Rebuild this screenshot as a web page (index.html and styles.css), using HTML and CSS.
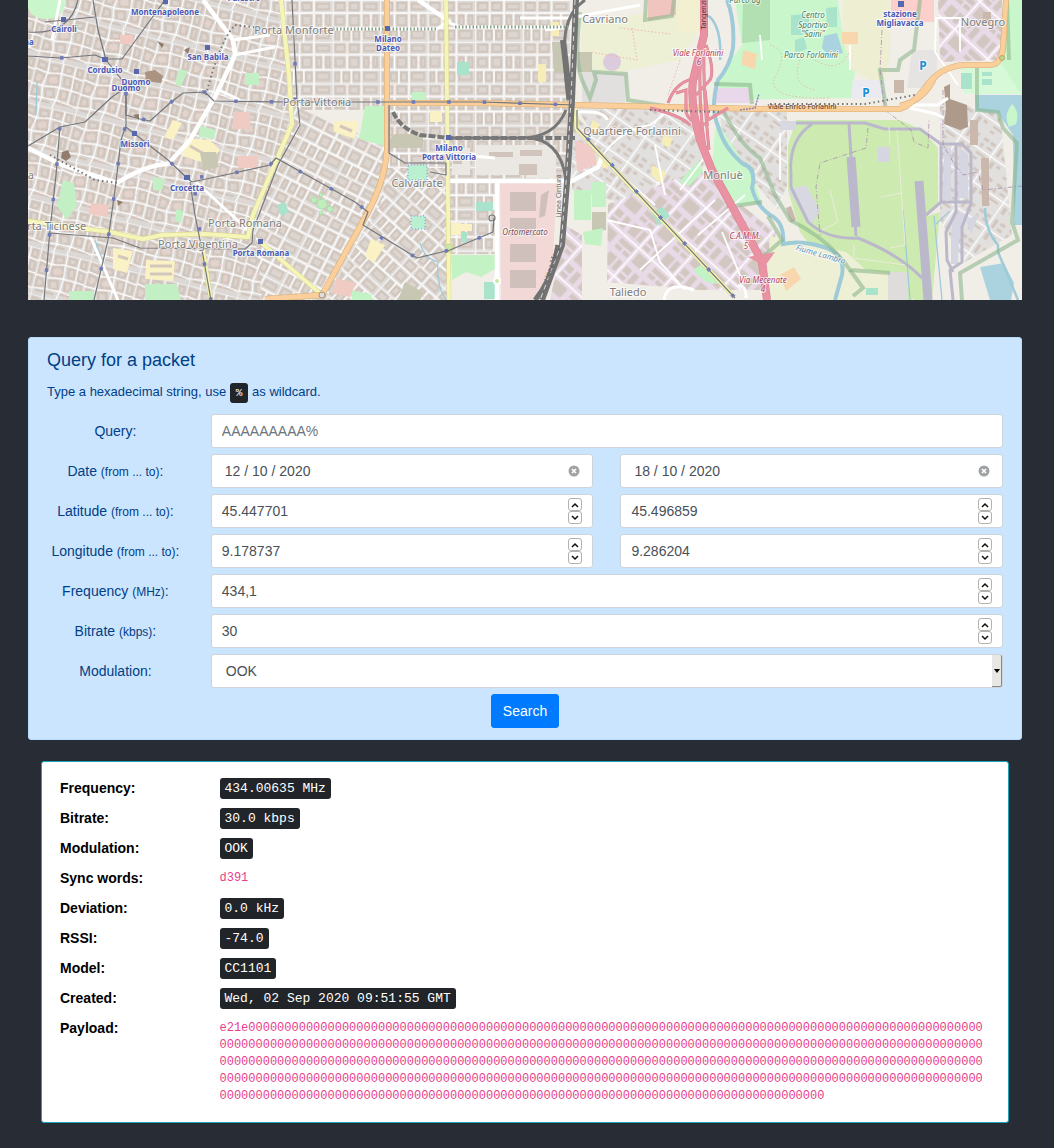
FILE: index.html
```html
<!DOCTYPE html>
<html lang="en">
<head>
<meta charset="utf-8">
<meta name="viewport" content="width=device-width, initial-scale=1">
<title>Query for a packet</title>
<link rel="stylesheet" href="styles.css">
</head>
<body>
<main class="page">
  <svg class="map" viewBox="28 0 994 300" preserveAspectRatio="xMidYMax slice" role="img" aria-label="Map of Milan">
    <defs>
      <pattern id="blocks" width="66" height="58" patternUnits="userSpaceOnUse" patternTransform="scale(.72)">
        <rect width="66" height="58" fill="#dfdcd9"/>
        <path d="M4 4h13v10H4zM24 4h12v10H24zM44 5h17v8H44zM4 23h12v11H4zM24 22h12v13H24zM44 22h6v13h-6zM57 22h5v13h-5zM4 43h5v11H4zM15 43h8v11h-8zM29 43h8v11h-8zM44 43h17v10H44z" fill="#ddd6d0" stroke="#d1c6bd" stroke-width="3"/>
        <path d="M0 0H66M0 18H66M0 39H66M20 0V39M40 0V58M53 18V39M12 39V58M0 0V58M26 39V58" fill="none" stroke="#fff" stroke-width="2"/>
        <path d="M40 18L66 39M20 0V18" stroke="#f0b8ae" stroke-width=".8" stroke-dasharray="2 2"/>
      </pattern>
      <pattern id="old" width="74" height="68" patternUnits="userSpaceOnUse" patternTransform="rotate(14) scale(.68)">
        <rect width="74" height="68" fill="#dcd8d5"/>
        <path d="M4 4l12 2-1 9-11-2zM23 6l12-1 2 8-12 3zM44 4h11l-1 8-9 2zM62 4h8v12l-7-3zM4 20l12 3-3 12H4zM22 23l15-4 2 13-15 3zM46 20l9-2 2 14h-9zM62 20l8 2v12l-7-1zM4 42l8 1 3 9-11 4zM22 43l12-3 3 11-11 5zM45 40l10-1 1 12-9 1zM63 40h7v15h-6zM5 61h28M42 59h26" fill="#ddd5cf" stroke="#d0c4bb" stroke-width="3.400"/>
        <path d="M0 0H74M0 16L20 19 40 15 74 18M0 38L20 39 40 36 74 37M0 58L20 56 42 55 74 59M19 0L20 19 17 38 20 56 18 68M40 0V15L42 36 41 55 38 68M59 0V17L60 37 59 58M0 0V68" fill="none" stroke="#fff" stroke-width="1.800"/>
        <path d="M0 28L20 29 42 27M30 15V36M50 37V68" fill="none" stroke="#f4cfc7" stroke-width="1"/>
      </pattern>
      <pattern id="slant" href="#blocks" patternTransform="rotate(27) scale(.72)"/>
      <pattern id="slant2" href="#blocks" patternTransform="rotate(42) scale(.72)"/>
      <pattern id="works" width="52" height="44" patternUnits="userSpaceOnUse" patternTransform="rotate(42) scale(.85)">
        <rect width="52" height="44" fill="#e8dae6"/>
        <path d="M3 3h11v14H3zM17 3h6v14h-6zM29 3h9v8h-9zM42 3h7v15h-7zM29 14h9v5h-9zM3 26h20v6H3zM3 35h9v5H3zM15 35h8v5h-8zM30 26h18v14H30z" fill="#d3c7c1"/>
        <path d="M0 22H52M26 0V44" stroke="#fff" stroke-width="1.800"/>
      </pattern>
      <pattern id="suburb" width="46" height="38" patternUnits="userSpaceOnUse" patternTransform="rotate(35) scale(.8)">
        <rect width="46" height="38" fill="#e1e0de"/>
        <path d="M3 4h7v4H3zM13 4h7v4h-7zM3 12h4v5H3zM12 12h8v3h-8zM27 4h4v12h-4zM35 4h7v4h-7zM35 12h7v4h-7zM4 24h14v3H4zM4 31h6v3H4zM27 24h5v9h-5zM36 24h5v4h-5z" fill="#d2c6be"/>
        <path d="M0 20H46M23 0V38" stroke="#fff" stroke-width="1.500"/>
      </pattern>
    </defs>

    <rect x="28" width="994" height="300" fill="#f1eee8"/>

    <!-- built-up districts -->
    <path d="M28 0H282L294 110 255 232 270 300H28z" fill="url(#old)"/>
    <path d="M282 0H570V182H388V110L294 110z" fill="url(#blocks)"/>
    <path d="M294 106L388 146V300H262L255 232z" fill="url(#slant)"/>
    <path d="M388 168H448V300H325L380 205z" fill="url(#slant2)"/>
    <path d="M450 182H498V254H450z" fill="url(#blocks)"/>
    <path d="M577 108H650L690 120 705 165 668 200 590 130z" fill="url(#suburb)"/>
    <path d="M590 130L668 200 650 210 572 190V112z" fill="url(#suburb)"/>
    <path d="M608 204L700 170 735 200 776 232 765 290H700L607 282z" fill="url(#works)"/>
    <path d="M720 110H787V185L778 210 740 165 722 140z" fill="url(#suburb)"/>
    <path d="M938 0H1002V60L940 62zM565 225l17 10v65h-32z" fill="url(#works)"/>
    <path d="M940 100L1000 112 1012 235 965 262 940 220z" fill="url(#suburb)"/>

    <!-- fields, parks and yards -->
    <path d="M582 22L640 14 680 0 700 30 680 60 620 72 582 70z" fill="#edf0d5"/>
    <path d="M582 70l45 4-2 30h-43z" fill="#e2e0df"/>
    <path d="M648 0h28v15l-28 6z" fill="#f0c5c0"/>
    <path d="M678 0h28v32h-28z" fill="#f2f0d0"/>
    <path d="M735 0H838L842 30 858 45 852 98 720 100 718 78 742 45z" fill="#c9f7cb"/>
    <path d="M743 0h27v40l-28 3z" fill="#b2e0b2"/>
    <path d="M842 0h48v58l-8 30-30-18-8-25z" fill="#eeeed3"/>
    <path d="M891 0h43v22h-30l-13-6z" fill="#fbcfcc"/>
    <path d="M714 88h36v15h-36z" fill="#e8d8ea"/>
    <path d="M842 32h16v12h-16zM743 50l14 4-2 15-13-4z" fill="#f8d6ae"/>
    <path d="M791 15l18-1v21h-18zM826 8l11-1v20h-10zM795 40l9-3 3 12-12 4z" fill="#a9e3cb"/>
    <path d="M824 36l13-3 6 20-14 3-7-8z" fill="#aad3df"/>
    <path d="M960 62h44l18 20v12h-58z" fill="#d7f9d8"/>
    <path d="M961 73h11v16h-11zM982 72h10v4h-10zM982 79h10v6h-10z" fill="#a9e3cb"/>
    <path d="M912 50h25v20l-14 18h-16z" fill="#e6e4e3"/>
    <path d="M853 80h32v18h-34z" fill="#eceaf1"/>
    <path d="M716 120L752 175 762 203 727 205 712 165z" fill="#c9f7cb"/>
    <path d="M796 120H900L922 130 938 148V205L926 218V300H915L850 268 800 232 788 190V145z" fill="#cdebb0"/>
    <path d="M800 232l112 38v30h10V218l18-6-8 88H850z" fill="#cdebb0"/>
    <path d="M770 236l76 16 20 18 24 3v27H765z" fill="#edf0d5"/>
    <path d="M888 272h20v28h-20z" fill="#dedddc"/>
    <path d="M780 275l14-8 7 12-15 12z" fill="#f8d6ae"/>
    <path d="M975 95h47v130h-8l-1-90-15-22-22-2z" fill="#aad3df"/>
    <path d="M980 267l24-4 10 20-3 17h-21z" fill="#aad3df"/>
    <path d="M1012 104q8 8 4 20l-7 3q-6-12 3-23z" fill="#c9f7cb"/>
    <path d="M1008 0h14v95l-20-30z" fill="#c9f7cb"/>
    <path d="M780 121h16v9h-16zM788 190l18-5 14 25-9 15z" fill="#d8d8e2"/>
    <path d="M878 147h12v15h-12zM944 148h7v52h-8zM959 148l9 6v44h-10zM954 212l13 2-8 25-1 25h-7v-27zM966 220l13-6-8 20z" fill="#d6d5e2"/>

    <path d="M28 0H66q-2 20-22 19-16-2-16-15z" fill="#c9f7cb"/>
    <path d="M63 180l11 3 3 22-10 15-10-14zM145 284h32l4 16h-36zM69 291h24v9H69zM175 85l4-16 9 2-7 15zM245 73h14v12h-14zM153 177l11 2-2 12-9-1zM200 126l16 4-2 9-15-2zM176 209l8 2-3 12-6-2z" fill="#c3efc4"/>
    <path d="M365 106h20v40l-26-7zM412 92h14v10h-14zM350 290l20 4 4 6h-22zM451 255h44v14l-14 8-15-5-14 8z" fill="#c3f3c5"/>
    <path d="M408 165h19v15h-19zM411 216h14v13h-14z" fill="#b9f0cf" stroke="#747bf0" stroke-width=".8" stroke-dasharray="1 2"/>
    <path d="M173 120l9 3-9 17-9-3zM186 138l24 2 10 10-12 14-26-8zM113 248l20 3-6 22-14-4zM146 260l29 1-2 20-28-2zM333 121h25l-3 18-21-7zM371 239l14 6-11 18-9-7zM451 223h10v12h-10zM460 224h12v7h-12zM430 111h12v11h-12z" fill="#faf2c4"/>
    <path d="M150 266h22M150 274h22M118 256l10 3M190 146l18 10M340 126l12 5" stroke="#d3c7bb" stroke-width="3"/>
    <path d="M120 35h13v9h-13zM91 203l18 2-2 12-18-3zM238 156h20v12h-20zM233 112h17v17h-17zM336 278l20 5-6 14-18-4z" fill="#f0cbc4"/>
    <path d="M200 152h16l3 15-16 4zM395 134h28v14h-34v-9zM405 282l18 10-3 8h-22zM552 42h12v30h-10zM578 52h14v20h-14zM592 212h14v18h-14z" fill="#c7c7b3"/>
    <path d="M457 62h12v13h-12zM476 202h17v9h-17zM484 282h11v17h-11zM461 232h6v10h-6zM277 205l8-3 4 10-8 4zM651 212l12-5 7 9-11 10zM866 288h12v7h-12z" fill="#a9e3cb"/>
    <g fill="#bdeebb" stroke="#9fd49f" stroke-width=".6"><circle cx="322" cy="204" r="5"/><circle cx="314" cy="200" r="3"/><circle cx="330" cy="209" r="3"/><circle cx="321" cy="195" r="2"/><circle cx="321" cy="213" r="2"/></g>
    <path d="M500 182h57l-5 95-15 23H501z" fill="#f2d9d7"/>
    <path d="M510 192h26v19h-26zM510 218h26v18h-26zM510 244h26v18h-26zM510 270h26v18h-26zM541 195l8-5-4 26-6 2z" fill="#cfc0bc"/>
    <path d="M476 145h50v30h-50zM505 150h16v5h-16zM452 148h18v27h-18zM526 145h30v33h-30z" fill="#ebe7e2"/>
    <path d="M489 152h24v5h-24zM520 150h22v6h-22zM519 164h18v11h-18zM453 153h9v11h-9z" fill="#d0c4bc"/>
    <path d="M574 190h17v30h-17zM592 182h14v25h-14zM583 232l20-4-2 18-16-2z" fill="#c3f3c5"/>
    <path d="M600 155l12 6-5 8-12-5zM592 120l8 4-4 8-6-3zM663 135l10 3-4 10-7-4zM652 165l14 7-4 12-10-8zM538 64h8v18h-8zM551 22h8v14h-8z" fill="#f7edb9"/>
    <path d="M679 182l20-22 4 12-14 14zM693 270l12-8 6 10 9 12-14-2z" fill="#c3f3c5"/>
    <path d="M575 140l18 6 4 18-20 8z" fill="#f0cbc7"/>
    <circle cx="612" cy="62" r="9" fill="#dccbdd"/>
    <path d="M145 72l10-2 8 6-2 7-15-2z" fill="#aa9381"/>
    <path d="M944 87l6-3 0 15 17 6 1 22-8 3-16-6 2-15z" fill="#ad9a8b"/>
    <path d="M983 12h8v14h-8zM970 120h8v25h-8zM981 158h8v48h-7zM894 80h10v13h-10zM786 208l5-2 5 14-5 3z" fill="#c9b8ab"/>
    <path d="M62 152l6-2 3 7-5 4-5-3zM117 200l6 2-5 4zM184 50l6-3-2 7zM133 115l6-1v6zM157 41l7 3-2 4z" fill="#927c6c"/>

    <!-- water courses -->
    <g fill="none" stroke="#9fcbd9">
      <path d="M727 0Q735 20 733 48Q730 66 718 80Q710 108 718 126Q724 148 743 164Q757 168 752 188Q756 205 770 215Q785 222 783 244Q800 240 820 246Q846 252 842 275L835 300" stroke-width="4"/>
      <path d="M709 16Q722 28 720 60M985 208Q985 230 998 245V252M998 252L1018 300" stroke-width="2.500"/>
      <path d="M903 210L910 300M934 216L942 300M950 211L936 224M420 243Q424 258 438 262Q436 285 446 300M37 82L36 115M95 240L103 262" stroke-width="1.300"/>
    </g>

    <!-- reserve boundaries -->
    <g fill="none" stroke="#86b387" stroke-opacity=".55" stroke-width="4">
      <path d="M580 12Q574 60 582 80L590 98 596 80 594 72 626 74 628 100 690 110M646 0L645 20 672 16 674 0"/>
      <path d="M920 0L914 50 900 60 898 70 880 70 884 95 886 112M714 84L750 85 752 104M724 112Q740 145 760 158L775 195 790 220Q830 240 850 270L890 273M727 207L762 202"/>
      <path d="M1007 0L1009 60M977 66V110L998 112 1003 128 1017 143 1012 222 1018 240 960 273 962 300M768 216L782 240 764 256V290M850 270l13 18-10 8"/>
    </g>
    <path d="M770 45Q790 50 776 75T830 98M800 60Q790 85 815 90M815 60Q840 75 850 50M632 28L637 60 590 52M620 28L670 34M680 60L668 95" fill="none" stroke="#f0a79c" stroke-width=".8" stroke-dasharray="1.500 2"/>

    <!-- airfield -->
    <g fill="none" stroke="#bbb8cc" stroke-linejoin="round">
      <path d="M796 123H865L885 129H920L941 144H962L971 153V204L962 227V262L950 270 953 300M812 124Q788 140 791 175V187L808 222Q828 240 858 238Q900 255 922 278M849 124L856 236M941 144V202H971M956 144V202L956 212 946 232 947 260 953 272M941 202L926 215" stroke-width="3"/>
      <path d="M851 157L856 227" stroke-width="9"/>
      <path d="M919 181L928 300" stroke-width="9"/>
    </g>
    <path d="M882 30L880 70 885 110 911 130 914 142 928 148 929 120M868 128L866 148 820 163 816 187 820 235M943 90V145L955 165 963 175 978 172 983 190 1022 186" fill="none" stroke="#a482a8" stroke-opacity=".7" stroke-width="1" stroke-dasharray="5 2 1 2"/>
    <path d="M889 127L890 145M897 130L905 245 890 248M830 190L838 222 822 230M881 197L901 193M854 245V258L905 265" fill="none" stroke="#eceadc"/>

    <!-- streets -->
    <g fill="none" stroke="#fff">
      <path d="M28 148L62 165 117 183Q145 165 168 164L190 140 215 97 235 55 233 40 203 0M449 181H572L598 167 603 155M497 181V300M418 0L450 22" stroke-width="4.500"/>
      <path d="M219 90L240 100M196 182L248 230M90 236L118 300M333 29H437L447 22 460 27H570M233 40L270 35M234 55L275 47M520 18H570L640 5M450 154L495 158M570 27L545 30M60 0L52 40" stroke-width="3"/>
      <path d="M603 155Q620 130 650 125L670 110M606 162L655 205M655 145L665 195M607 220L650 230 660 262 685 290M698 235L745 195M640 270L715 200M722 232L742 280M710 150L680 190M760 35L762 60M780 133V180M935 52L936 18H960V52M935 52L958 85M850 70V45" stroke-width="1.800"/>
      <path d="M575 112Q605 110 607 120M910 108L936 114 944 118M910 105H938L948 98M664 300Q667 280 694 290M738 286q8-2 8 12" stroke-width="3"/>
    </g>

    <!-- secondary roads -->
    <g fill="none">
      <g stroke="#d5d08c">
        <path d="M28 221L80 228 110 232 143 239 162 235 205 234 248 237 253 215 292 124 289 75 281 0" stroke-width="5"/>
        <path d="M446 0L449 300M203 250L211 300M258 240L322 295M575 106L577 129 735 298" stroke-width="4.500"/>
      </g>
      <g stroke="#f4f5b7">
        <path d="M28 221L80 228 110 232 143 239 162 235 205 234 248 237 253 215 292 124 289 75 281 0" stroke-width="4.200"/>
        <path d="M446 0L449 300M203 250L211 300M258 240L322 295M575 106L577 129 735 298" stroke-width="3.800"/>
      </g>
      <path d="M387 0V150Q385 180 368 212L322 295M265 299L322 295M387 103H480L575 105 770 109H900Q912 105 925 88 940 66 965 65H990Q1001 65 1003 48L1006 0M900 106Q925 100 935 76" stroke="#d9ae74" stroke-width="6"/>
      <path d="M387 0V150Q385 180 368 212L322 295M265 299L322 295M387 103H480L575 105 770 109H900Q912 105 925 88 940 66 965 65H990Q1001 65 1003 48L1006 0M900 106Q925 100 935 76" stroke="#fbcf9c" stroke-width="4.800"/>
    </g>
    <circle cx="449" cy="248" r="4" fill="#c9e8a9" stroke="#d5d08c"/>
    <circle cx="322" cy="295" r="3" fill="#ddd" stroke="#a89576"/>
    <circle cx="1002" cy="58" r="2.500" fill="#b6d99a" stroke="#c79d60"/>
    <circle cx="497" cy="281" r="3" fill="#c9e8a9" stroke="#fff" stroke-width="2"/>

    <!-- motorway -->
    <g fill="none" stroke="#dc7e92">
      <path d="M704 0V35L693 80Q690 105 700 140L712 170 745 230 762 262 767 300" stroke-width="8"/>
      <path d="M701 50Q697 100 706 155M706 45Q715 70 710 80L696 95M704 50Q703 90 709 150M668 103Q676 80 698 78M650 108Q680 115 690 125M705 90L708 120 728 108M709 124Q690 125 686 112V90L676 93" stroke-width="3"/>
    </g>
    <path d="M704 0V35L693 80Q690 105 700 140L712 170 745 230 762 262 767 300" fill="none" stroke="#e892a2" stroke-width="7"/>
    <path d="M701 50Q697 100 706 155M706 45Q715 70 710 80L696 95M704 50Q703 90 709 150M668 103Q676 80 698 78M650 108Q680 115 690 125M705 90L708 120 728 108M709 124Q690 125 686 112V90L676 93" fill="none" stroke="#e892a2" stroke-width="2.200"/>
    <path d="M748 257l27-5-10 14z" fill="#e892a2"/>

    <!-- railways -->
    <g fill="none">
      <path d="M450 138H520Q555 138 566 110M520 138Q560 135 566 180M568 100Q562 50 566 30 570 10 585 0" stroke="#777" stroke-width="3"/>
      <path d="M393 112Q400 128 420 135L450 138H575" stroke="#777" stroke-width="4" stroke-dasharray="7 2"/>
      <path d="M576 0L572 100 568 170 562 245 542 300M570 100L563 40" stroke="#727272" stroke-width="6"/>
      <path d="M558 245Q552 280 535 300" stroke="#727272" stroke-width="5"/>
      <path d="M575 0L571 100 567 170 561 245 540 300" stroke="#ddd" stroke-width="1" stroke-dasharray="5 4"/>
      <path d="M333 29H437M455 27H570" stroke="#87a389" stroke-width="3" stroke-dasharray="1.500 2"/>
      <path d="M206 95Q220 40 235 25L262 28M50 155L95 180 118 183M650 110L720 112M770 104H865L915 95" stroke="#777" stroke-width="2" stroke-dasharray="1.500 3"/>
      <path d="M740 110L755 108 759 94" stroke="#8987ba" stroke-width="1.500" stroke-dasharray="2 1"/>
    </g>

    <!-- tram and metro lines -->
    <g fill="none" stroke="#75767b" stroke-width="1.200" stroke-linejoin="round">
      <path d="M28 56L60 58 95 55 105 59H122L165 0M93 0L98 30 106 60 126 85V115L140 119 150 121 170 103 183 93 205 92 214 101 290 102H480L575 105"/>
      <path d="M126 85V125L121 140 115 190 108 240 94 300M126 127L168 160 187 178 192 182 225 175 270 165 276 158 355 202 368 212 363 225 417 258 450 250 493 232 494 218"/>
      <path d="M28 146L60 127 85 122 112 97 125 88M60 127L56 175 50 230 44 300M190 182L195 215 202 250 211 300M50 233L113 238 140 248 245 249 252 243 253 230 278 165 300 125 297 100 295 60 292 0"/>
      <path d="M389 105V153L405 163H446V175L430 172M577 110V128L735 298M28 32Q70 35 78 0M45 22L95 17"/>
      <circle cx="492" cy="218" r="3"/>
    </g>
    <g fill="none" stroke="#6f7ab9" stroke-width="3.500" stroke-dasharray="3.500 32">
      <path d="M60 58L95 55M126 92V125L121 140 115 190 108 240 94 300M142 119L150 121 170 103 183 93 205 92 214 101 290 102H480L575 105"/>
      <path d="M140 145L168 160 187 178 225 175 270 165 276 158 355 202 368 212M60 127L56 175 50 230 44 300M195 192L202 250 211 300"/>
      <path d="M587 138L735 298M380 237L417 258 450 250 493 232M295 62V100"/>
    </g>
    <path d="M163 0h5v4h-5zM61 17h5v5h-5zM205 45h5v5h-5zM134 69h5v5h-5zM102 57h6v5h-6zM132 131h5v5h-5zM184 175h6v5h-6zM258 239h5v5h-5zM385 26h5v5h-5zM446 135h5v5h-5zM898 1h6v6h-6z" fill="#5967ad"/>

    <!-- place names -->
    <g class="station">
      <text x="165" y="15">Montenapoleone</text><text x="64" y="32">Cairoli</text><text x="244" y="1">Palestro</text>
      <text x="208" y="60">San Babila</text><text x="105" y="73">Cordusio</text><text x="136" y="85">Duomo</text><text x="126" y="91">Duomo</text>
      <text x="135" y="147">Missori</text><text x="187" y="191">Crocetta</text><text x="261" y="256">Porta Romana</text>
      <text x="388" y="42">Milano</text><text x="388" y="51">Dateo</text><text x="449" y="151">Milano</text><text x="449" y="160">Porta Vittoria</text>
      <text x="900" y="17">stazione</text><text x="900" y="26">Migliavacca</text><text x="17" y="45">Cadorna</text>
    </g>
    <g class="place">
      <text x="294" y="34">Porta Monforte</text><text x="317" y="106">Porta Vittoria</text><text x="245" y="227">Porta Romana</text>
      <text x="198" y="248">Porta Vigentina</text><text x="50" y="230">Porta Ticinese</text><text x="417" y="187">Calvairate</text>
      <text x="605" y="23">Cavriano</text><text x="632" y="135">Quartiere Forlanini</text><text x="723" y="179">Monluè</text>
      <text x="628" y="296">Taliedo</text><text x="983" y="26">Novegro</text><text x="11" y="179">Magenta</text>
    </g>
    <g class="exit">
      <text x="698" y="56">Viale Forlanini</text><text x="699" y="65">6</text><text x="745" y="239">C.A.M.M.</text><text x="746" y="249">5</text>
      <text x="763" y="283">Via Mecenate</text><text x="763" y="292">4</text>
    </g>
    <text class="exit market" x="525" y="235">Ortomercato</text>
    <g class="park">
      <text x="813" y="18">Centro</text><text x="813" y="28">Sportivo</text><text x="813" y="37">"Saini"</text><text x="811" y="58">Parco Forlanini</text><text x="745" y="3">Parco 8g</text>
    </g>
    <text class="park river" x="820" y="257" transform="rotate(16 820 257)">Fiume Lambro</text>
    <g class="road">
      <text x="802" y="109">Viale Enrico Forlanini</text>
      <text x="706" y="10" transform="rotate(-90 706 10)">Tangenziale</text>
      <text class="rail" x="561" y="196" transform="rotate(-90 561 196)">Linea Cintura</text>
      <text class="rail" x="554" y="264" transform="rotate(-72 554 264)">Linea Merci</text>
    </g>
    <g class="parking"><text x="923" y="70">P</text><text x="866" y="97">P</text></g>
  </svg>

  <form class="query">
    <h1 class="title">Query for a packet</h1>
    <p class="help">Type a hexadecimal string, use <kbd class="key">%</kbd> as wildcard.</p>

    <div class="rows">
      <label class="label" for="query">Query:</label>
      <div class="field wide"><input id="query" class="input" type="text" placeholder="AAAAAAAAA%"></div>

      <label class="label" for="date-from">Date <small class="note">(from ... to)</small>:</label>
      <div class="field date">
        <input id="date-from" class="input" type="text" value="12 / 10 / 2020">
        <button class="clear" type="button" aria-label="Clear start date"><svg class="cross" viewBox="0 0 12 12"><circle cx="6" cy="6" r="5.500" fill="#a0a3a6"/><path d="M4 4l4 4M8 4L4 8" stroke="#fff" stroke-width="1.600"/></svg></button>
      </div>
      <div class="field date">
        <input class="input" type="text" value="18 / 10 / 2020" aria-label="Date to">
        <button class="clear" type="button" aria-label="Clear end date"><svg class="cross" viewBox="0 0 12 12"><circle cx="6" cy="6" r="5.500" fill="#a0a3a6"/><path d="M4 4l4 4M8 4L4 8" stroke="#fff" stroke-width="1.600"/></svg></button>
      </div>

      <label class="label" for="lat-from">Latitude <small class="note">(from ... to)</small>:</label>
      <div class="field">
        <input id="lat-from" class="input" type="text" inputmode="decimal" value="45.447701">
        <span class="stepper"><button class="step" type="button" aria-label="Increase"><svg class="arrow" viewBox="0 0 8 6"><path d="M1 5l3-3 3 3"/></svg></button><button class="step" type="button" aria-label="Decrease"><svg class="arrow" viewBox="0 0 8 6"><path d="M1 1l3 3 3-3"/></svg></button></span>
      </div>
      <div class="field">
        <input class="input" type="text" inputmode="decimal" value="45.496859" aria-label="Latitude to">
        <span class="stepper"><button class="step" type="button" aria-label="Increase"><svg class="arrow" viewBox="0 0 8 6"><path d="M1 5l3-3 3 3"/></svg></button><button class="step" type="button" aria-label="Decrease"><svg class="arrow" viewBox="0 0 8 6"><path d="M1 1l3 3 3-3"/></svg></button></span>
      </div>

      <label class="label" for="lon-from">Longitude <small class="note">(from ... to)</small>:</label>
      <div class="field">
        <input id="lon-from" class="input" type="text" inputmode="decimal" value="9.178737">
        <span class="stepper"><button class="step" type="button" aria-label="Increase"><svg class="arrow" viewBox="0 0 8 6"><path d="M1 5l3-3 3 3"/></svg></button><button class="step" type="button" aria-label="Decrease"><svg class="arrow" viewBox="0 0 8 6"><path d="M1 1l3 3 3-3"/></svg></button></span>
      </div>
      <div class="field">
        <input class="input" type="text" inputmode="decimal" value="9.286204" aria-label="Longitude to">
        <span class="stepper"><button class="step" type="button" aria-label="Increase"><svg class="arrow" viewBox="0 0 8 6"><path d="M1 5l3-3 3 3"/></svg></button><button class="step" type="button" aria-label="Decrease"><svg class="arrow" viewBox="0 0 8 6"><path d="M1 1l3 3 3-3"/></svg></button></span>
      </div>

      <label class="label" for="frequency">Frequency <small class="note">(MHz)</small>:</label>
      <div class="field wide">
        <input id="frequency" class="input" type="text" inputmode="decimal" value="434,1">
        <span class="stepper"><button class="step" type="button" aria-label="Increase"><svg class="arrow" viewBox="0 0 8 6"><path d="M1 5l3-3 3 3"/></svg></button><button class="step" type="button" aria-label="Decrease"><svg class="arrow" viewBox="0 0 8 6"><path d="M1 1l3 3 3-3"/></svg></button></span>
      </div>

      <label class="label" for="bitrate">Bitrate <small class="note">(kbps)</small>:</label>
      <div class="field wide">
        <input id="bitrate" class="input" type="text" inputmode="decimal" value="30">
        <span class="stepper"><button class="step" type="button" aria-label="Increase"><svg class="arrow" viewBox="0 0 8 6"><path d="M1 5l3-3 3 3"/></svg></button><button class="step" type="button" aria-label="Decrease"><svg class="arrow" viewBox="0 0 8 6"><path d="M1 1l3 3 3-3"/></svg></button></span>
      </div>

      <label class="label" for="modulation">Modulation:</label>
      <div class="field wide choice">
        <select id="modulation" class="input select"><option>OOK</option></select>
        <span class="drop" aria-hidden="true"><svg class="caret" viewBox="0 0 6 4"><path d="M0 0h6L3 4z"/></svg></span>
      </div>
    </div>

    <button class="search" type="submit">Search</button>
  </form>

  <dl class="result">
    <dt class="name">Frequency:</dt><dd class="value"><kbd class="badge">434.00635 MHz</kbd></dd>
    <dt class="name">Bitrate:</dt><dd class="value"><kbd class="badge">30.0 kbps</kbd></dd>
    <dt class="name">Modulation:</dt><dd class="value"><kbd class="badge">OOK</kbd></dd>
    <dt class="name">Sync words:</dt><dd class="value"><code class="code">d391</code></dd>
    <dt class="name">Deviation:</dt><dd class="value"><kbd class="badge">0.0 kHz</kbd></dd>
    <dt class="name">RSSI:</dt><dd class="value"><kbd class="badge">-74.0</kbd></dd>
    <dt class="name">Model:</dt><dd class="value"><kbd class="badge">CC1101</kbd></dd>
    <dt class="name">Created:</dt><dd class="value"><kbd class="badge">Wed, 02 Sep 2020 09:51:55 GMT</kbd></dd>
    <dt class="name">Payload:</dt><dd class="value payload"><code class="code">e21e000000000000000000000000000000000000000000000000000000000000000000000000000000000000000000000000000000000000000000000000000000000000000000000000000000000000000000000000000000000000000000000000000000000000000000000000000000000000000000000000000000000000000000000000000000000000000000000000000000000000000000000000000000000000000000000000000000000000000000000000000000000000000000000000000000000000000000000000000000000000000000000000000000000000000000000000000000000000000000000000000000000000000000000000</code></dd>
  </dl>
</main>
</body>
</html>
```

FILE: styles.css
```css
* {
  box-sizing: border-box;
}

body {
  margin: 0;
  background: #282c34;
  color: #000;
  font: 14px/22px "Liberation Sans", Arial, sans-serif;
}

.page {
  padding: 0 32px 27px 28px;
}

/* Map */
.map {
  display: block;
  width: 100%;
  height: 300px;
}

.map text {
  text-anchor: middle;
  paint-order: stroke;
  stroke: #fff;
  stroke-opacity: .7;
  stroke-width: 2px;
  font-family: "Noto Sans", "Open Sans", sans-serif;
}

.station text {
  fill: #4a5ab5;
  font-size: 8px;
  font-weight: 700;
}

.place text {
  fill: #7d7d7d;
  font-size: 11px;
}

.exit text,
.map .exit {
  fill: #b3435b;
  font-size: 8px;
  font-style: italic;
}

.map .market {
  fill: #7d4a52;
}

.park text,
.map .park {
  fill: #3f8159;
  font-size: 8px;
  font-style: italic;
}

.map .river {
  fill: #5d93b8;
}

.road text {
  fill: #48362d;
  stroke: none;
  font-size: 7px;
}

.road .rail {
  fill: #666;
}

.parking text {
  fill: #1a8fd6;
  font-size: 12px;
  font-weight: 700;
}

/* Search form */
.query {
  display: flex;
  flex-direction: column;
  margin-top: 37px;
  padding: 11px 18px;
  border: 1px solid #b8daff;
  border-radius: 3px;
  background: #cce5ff;
  color: #004085;
}

.title {
  margin: 0 0 11px;
  font-size: 18px;
  font-weight: 400;
  line-height: 22px;
}

.help {
  margin: 0 0 11px;
  font-size: 13px;
  line-height: 20px;
}

.key,
.badge {
  border-radius: 3px;
  background: #212529;
  color: #fff;
  font-family: "Liberation Mono", "Courier New", monospace;
}

.key {
  padding: 4px 6px;
  font-size: 11px;
}

.rows {
  display: grid;
  grid-template-columns: repeat(12, minmax(0, 1fr));
  gap: 6px 27px;
}

.label {
  grid-column: span 2;
  align-self: center;
  text-align: center;
  white-space: nowrap;
}

.note {
  font-size: 12px;
}

.field {
  grid-column: span 5;
  display: flex;
  align-items: center;
  height: 34px;
  padding: 0 10px;
  border: 1px solid #ced4da;
  border-radius: 3px;
  background: #fff;
}

.wide {
  grid-column: span 10;
}

.date {
  padding: 0 12px 0 13px;
}

.input {
  flex: 1;
  min-width: 0;
  height: 32px;
  padding: 0;
  border: 0;
  outline: 0;
  background: transparent;
  color: #495057;
  font: inherit;
}

.input::placeholder {
  color: #6c757d;
  opacity: 1;
}

.clear {
  display: flex;
  padding: 0;
  border: 0;
  background: none;
}

.cross {
  width: 12px;
  height: 12px;
}

.stepper {
  display: flex;
  flex-direction: column;
}

.step {
  display: flex;
  align-items: center;
  justify-content: center;
  width: 14px;
  height: 13px;
  padding: 0;
  border: 1px solid #b3b1ad;
  border-radius: 3px;
  background: #fff;
}

.arrow {
  width: 8px;
  height: 6px;
  fill: none;
  stroke: #111;
  stroke-width: 1.5;
}

.choice {
  padding: 0 0 0 14px;
}

.select {
  appearance: none;
}

.drop {
  display: flex;
  align-items: center;
  justify-content: center;
  width: 10px;
  height: 32px;
  border-right: 1px solid #888;
  border-bottom: 1px solid #888;
  border-radius: 0 2px 2px 0;
  background: #e7e7e5;
}

.caret {
  width: 6px;
  height: 4px;
}

.search {
  align-self: center;
  height: 34px;
  margin-top: 6px;
  padding: 0 11px;
  border: 1px solid #007bff;
  border-radius: 3px;
  background: #007bff;
  color: #fff;
  font: inherit;
}

/* Packet details */
.result {
  display: grid;
  grid-template-columns: repeat(12, minmax(0, 1fr));
  gap: 8px 27px;
  margin: 21px 13px 0;
  padding: 15px 18px 17px;
  border: 1px solid #17a2b8;
  border-radius: 3px;
  background: #fff;
}

.name {
  grid-column: span 2;
  font-weight: 700;
}

.value {
  grid-column: span 10;
  display: flex;
  align-items: center;
  min-width: 0;
  margin: 0;
}

.badge {
  padding: 2px 5px;
  font-size: 13px;
  line-height: 17px;
}

.code {
  color: #e83e8c;
  font-family: "Liberation Mono", "Courier New", monospace;
  font-size: 12px;
  line-height: 17px;
}

.payload {
  padding-top: 3px;
}

.payload .code {
  min-width: 0;
  overflow-wrap: anywhere;
}
```
